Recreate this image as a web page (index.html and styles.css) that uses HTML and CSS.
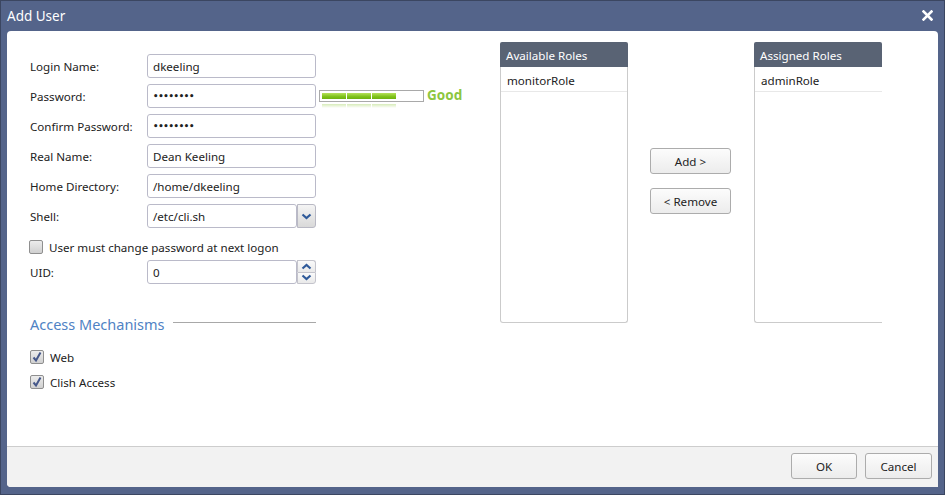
FILE: index.html
```html
<!DOCTYPE html>
<html>
<head>
<meta charset="utf-8">
<title>Add User</title>
<link rel="stylesheet" href="styles.css">
</head>
<body>
<div class="window">
  <div class="titlebar">
    <span class="title">Add User</span>
    <svg class="close" width="11" height="11" viewBox="0 0 11 11"><path d="M1.5 1.5 L9.5 9.5 M9.5 1.5 L1.5 9.5" stroke="#fff" stroke-width="2.6" stroke-linecap="square"/></svg>
  </div>
  <div class="body">
    <div class="main">
      <div class="form">
        <div class="row"><span class="label">Login Name:</span><div class="field">dkeeling</div></div>
        <div class="row"><span class="label">Password:</span><div class="field pw">••••••••</div>
          <div class="strength">
            <div class="bar"><span class="seg"></span><span class="seg"></span><span class="seg"></span></div>
            <div class="reflect"><span class="seg"></span><span class="seg"></span><span class="seg"></span></div>
          </div>
          <span class="good">Good</span>
        </div>
        <div class="row"><span class="label">Confirm Password:</span><div class="field pw">••••••••</div></div>
        <div class="row"><span class="label">Real Name:</span><div class="field">Dean Keeling</div></div>
        <div class="row"><span class="label">Home Directory:</span><div class="field">/home/dkeeling</div></div>
        <div class="row"><span class="label">Shell:</span>
          <div class="combo"><div class="field short">/etc/cli.sh</div>
            <div class="dropbtn"><svg width="11" height="7" viewBox="0 0 11 7"><path d="M1.5 1.5 L5.5 5 L9.5 1.5" fill="none" stroke="#2f5a9a" stroke-width="2.2"/></svg></div>
          </div>
        </div>
        <div class="checkrow first">
          <span class="cbox"></span><span>User must change password at next logon</span>
        </div>
        <div class="row"><span class="label">UID:</span>
          <div class="combo"><div class="field short">0</div>
            <div class="spin">
              <div class="spinbtn"><svg width="11" height="7" viewBox="0 0 11 7"><path d="M1.5 5.5 L5.5 2 L9.5 5.5" fill="none" stroke="#2f5a9a" stroke-width="2.2"/></svg></div>
              <div class="spinbtn"><svg width="11" height="7" viewBox="0 0 11 7"><path d="M1.5 1.5 L5.5 5 L9.5 1.5" fill="none" stroke="#2f5a9a" stroke-width="2.2"/></svg></div>
            </div>
          </div>
        </div>
        <div class="section"><span class="section-title">Access Mechanisms</span><span class="section-line"></span></div>
        <div class="checkrow">
          <span class="cbox checked"><svg width="12" height="12" viewBox="0 0 12 12"><path d="M2.5 6.5 L5 9.5 L9.5 1.5" fill="none" stroke="#46588a" stroke-width="2"/></svg></span><span>Web</span>
        </div>
        <div class="checkrow">
          <span class="cbox checked"><svg width="12" height="12" viewBox="0 0 12 12"><path d="M2.5 6.5 L5 9.5 L9.5 1.5" fill="none" stroke="#46588a" stroke-width="2"/></svg></span><span>Clish Access</span>
        </div>
      </div>
      <div class="roles">
        <div class="panel">
          <div class="panel-head">Available Roles</div>
          <div class="panel-list"><div class="item">monitorRole</div></div>
        </div>
        <div class="mid">
          <button class="btn mid-btn">Add &gt;</button>
          <button class="btn mid-btn">&lt; Remove</button>
        </div>
        <div class="panel assigned">
          <div class="panel-head">Assigned Roles</div>
          <div class="panel-list"><div class="item">adminRole</div></div>
        </div>
      </div>
    </div>
    <div class="footer">
      <button class="btn ok">OK</button>
      <button class="btn cancel">Cancel</button>
    </div>
  </div>
</div>
</body>
</html>
```
FILE: styles.css
```css
* { box-sizing: border-box; }
html, body { margin: 0; padding: 0; }
body {
  width: 945px; height: 495px; overflow: hidden;
  font-family: "Noto Sans", "Open Sans", sans-serif;
  font-size: 11.6px; color: #222;
}
.window {
  width: 945px; height: 495px;
  background: #54648a;
  border: 1px solid #3b4661;
  display: flex; flex-direction: column;
}
.titlebar {
  height: 30px; flex: none;
  display: flex; align-items: center; justify-content: space-between;
  padding: 0 11px 1px 6px;
}
.title { color: #fff; font-size: 13.5px; }
.close { display: block; }
.body {
  flex: 1; margin: 0 6px 7px 6px;
  background: #fff; border-radius: 4px 4px 0 4px;
  display: flex; flex-direction: column; overflow: hidden;
}
.main { flex: 1; display: flex; align-items: flex-start; }
.form { margin: 23px 0 0 23px; width: 470px; }
.row { display: flex; align-items: center; height: 24px; margin-bottom: 6px; }
.label { width: 117px; flex: none; }
.field {
  width: 169px; height: 24px;
  border: 1px solid #babac9; border-radius: 3px;
  padding: 1px 0 0 5px; line-height: 22px; background: #fff;
  white-space: nowrap; overflow: hidden;
}
.field.pw { font-size: 8.5px; letter-spacing: -0.3px; line-height: 21px; font-family: "DejaVu Sans", sans-serif; font-weight: bold; }
.field.short { width: 150px; }
.combo { display: flex; height: 24px; }
.dropbtn {
  width: 19px; height: 24px;
  border: 1px solid #b9b9c4; border-radius: 0 3px 3px 0;
  background: linear-gradient(#f4f4f4, #d9d9d9);
  display: flex; align-items: center; justify-content: center;
}
.spin { width: 19px; height: 24px; display: flex; flex-direction: column; }
.spinbtn {
  flex: 1; border: 1px solid #c4c4cc; background: linear-gradient(#fafafa, #e9e9e9);
  display: flex; align-items: center; justify-content: center;
}
.spinbtn:first-child { border-radius: 0 3px 0 0; border-bottom: none; }
.spinbtn:last-child { border-radius: 0 0 3px 0; }
.strength {
  margin-left: 3px; width: 105px; height: 24px;
  display: flex; flex-direction: column; padding-top: 6px; gap: 2px;
}
.bar {
  height: 12px; border: 1px solid #a9a9a9; background: #fff;
  display: flex; gap: 1px; padding: 2px 0 0 2px;
}
.seg { width: 24px; height: 6px; background: linear-gradient(#b6e05a, #7ec21a 60%, #6fb210); }
.reflect { display: flex; gap: 1px; padding-left: 3px; height: 4px; opacity: 0.3; }
.reflect .seg { height: 4px; background: linear-gradient(#7ec21a, #ffffff); }
.good { margin: 0 0 2px 3px; color: #8dc63f; font-weight: bold; font-size: 13.5px; }
.checkrow { display: flex; align-items: center; gap: 6px; height: 14px; margin: 0 0 11px 0; }
.checkrow.first { margin: 12px 0 6px -1px; }
.cbox {
  width: 14px; height: 14px; flex: none;
  border: 1px solid #8f8f8f; border-radius: 2px;
  background: linear-gradient(#ececec, #d0d0d0);
  display: flex; align-items: center; justify-content: center;
}
.section { display: flex; align-items: center; margin: 30px 0 16px 0; height: 20px; width: 286px; }
.section-title { color: #4f82c4; font-size: 14.5px; white-space: nowrap; }
.section-line { flex: 1; height: 1px; background: #a8a8a8; margin: 0 0 3px 8px; }
.roles { display: flex; margin-top: 11px; }
.panel { width: 128px; height: 281px; display: flex; flex-direction: column; }
.panel-head {
  height: 25px; background: #596374; color: #fff;
  padding: 1px 0 0 6px; line-height: 25px; border-radius: 2px 2px 0 0;
}
.panel-list {
  flex: 1; border: 1px solid #cbcbcb; border-top: none; border-radius: 0 0 3px 3px;
}
.assigned .panel-list { border-right: none; border-radius: 0 0 0 3px; }
.item { height: 25px; line-height: 16px; padding: 6px 0 0 6px; border-bottom: 1px solid #e8e8e8; }
.mid { width: 126px; padding: 106px 0 0 22px; display: flex; flex-direction: column; gap: 14px; }
.btn {
  font-family: inherit; font-size: 11.6px; color: #222;
  height: 26px; border: 1px solid #acacac; border-radius: 3px;
  background: linear-gradient(#fcfcfc, #ececec); padding: 0;
}
.mid-btn { width: 81px; }
.footer {
  height: 41px; flex: none; background: #f2f2f2; border-top: 1px solid #cdcdcd;
  display: flex; justify-content: flex-end; align-items: flex-start;
  padding: 6px 6px 0 0; gap: 8px;
}
.ok { width: 66px; }
.cancel { width: 67px; }
```
